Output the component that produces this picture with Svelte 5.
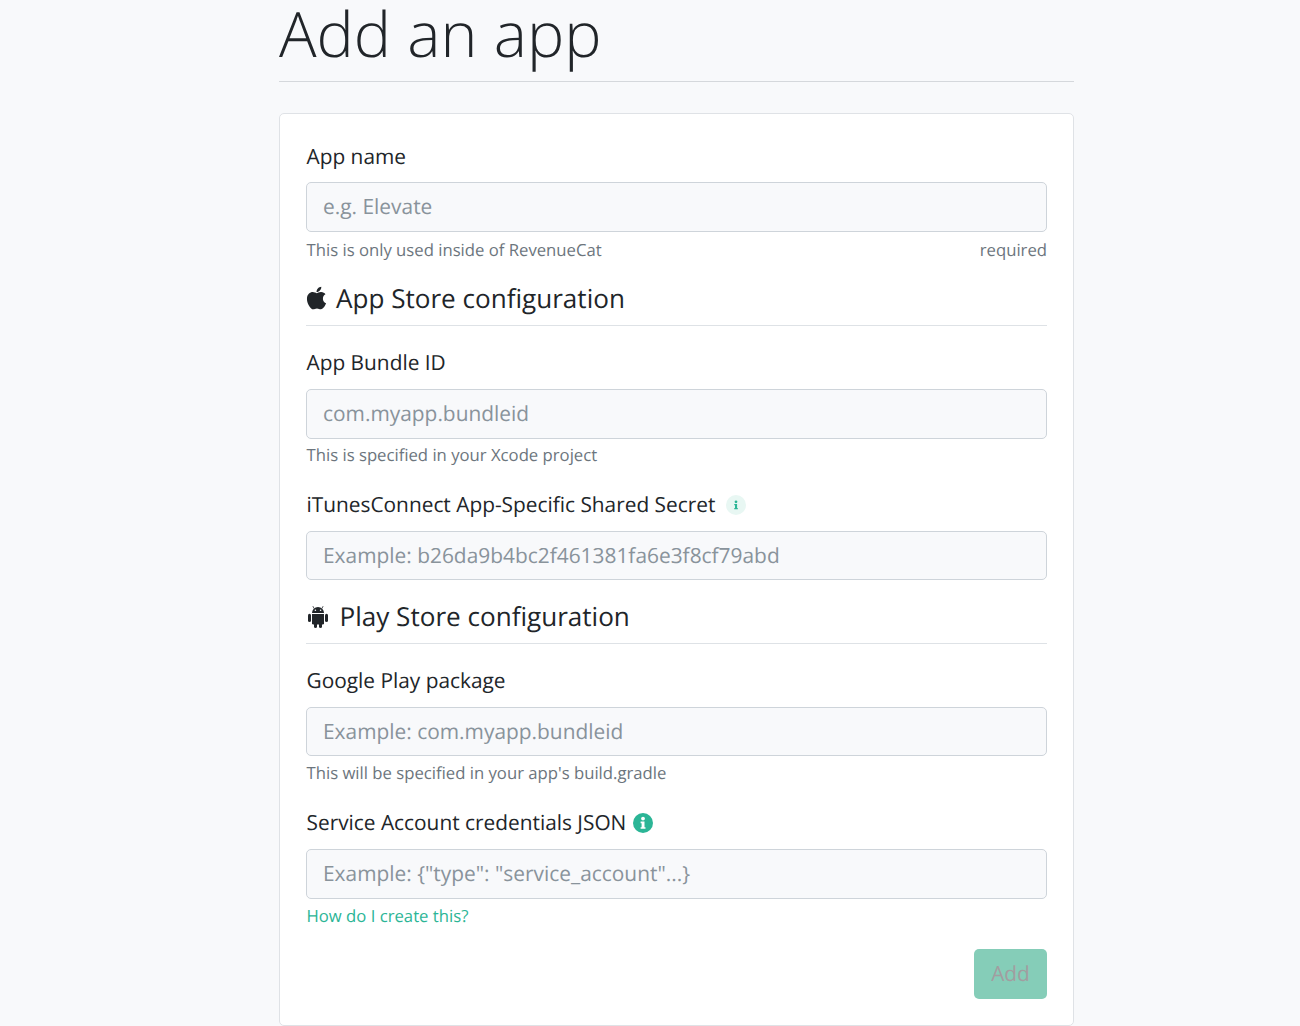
<script>
	const apple =
		'M318.7 268.7c-.2-36.7 16.4-64.4 50-84.8-18.8-26.9-47.2-41.7-84.7-44.6-35.5-2.8-74.3 20.7-88.5 20.7-15 0-49.4-19.7-76.4-19.7C63.3 141.2 4 184.8 4 273.5q0 39.3 14.4 81.2c12.8 36.7 59 126.7 107.2 125.2 25.2-.6 43-17.9 75.8-17.9 31.8 0 48.3 17.9 76.4 17.9 48.6-.7 90.4-82.5 102.6-119.3-65.2-30.7-61.7-90-61.7-91.9zm-56.6-164.2c27.3-32.4 24.8-61.9 24-72.5-24.1 1.4-52 16.4-67.9 34.9-17.5 19.8-27.8 44.3-25.6 71.9 26.1 2 49.9-11.4 69.5-34.3z';
</script>

{#snippet info(soft)}
	<svg class="info" class:soft viewBox="0 0 20 20" aria-hidden="true">
		<circle class="disc" cx="10" cy="10" r="10" />
		<circle class="mark" cx="10" cy="5.6" r="1.9" />
		<path class="mark" d="M7.6 8.6h3.9v5.6h1v1.6H7.6v-1.6h1v-4H7.6z" />
	</svg>
{/snippet}

<main class="page">
	<h1>Add an app</h1>

	<form class="card">
		<div class="field first">
			<label for="name">App name</label>
			<input id="name" placeholder="e.g. Elevate" />
			<div class="help">
				<span>This is only used inside of RevenueCat</span>
				<span>required</span>
			</div>
		</div>

		<h2>
			<svg class="apple" viewBox="0 0 384 512" aria-hidden="true"><path d={apple} /></svg>
			App Store configuration
		</h2>

		<div class="field">
			<label for="bundle">App Bundle ID</label>
			<input id="bundle" placeholder="com.myapp.bundleid" />
			<div class="help"><span>This is specified in your Xcode project</span></div>
		</div>

		<div class="field">
			<label for="secret">iTunesConnect App-Specific Shared Secret {@render info(true)}</label>
			<input id="secret" placeholder="Example: b26da9b4bc2f461381fa6e3f8cf79abd" />
		</div>

		<h2 class="play">
			<svg class="android" viewBox="0 0 20 24" aria-hidden="true">
				<path d="M4 9a6 6 0 0 1 12 0z" />
				<path class="antenna" d="M6.2 4.6 4.9 2.2M13.8 4.6l1.3-2.4" />
				<path d="M4 10h12v9.2a1.4 1.4 0 0 1-1.4 1.4H5.4A1.4 1.4 0 0 1 4 19.2z" />
				<rect x="0" y="9.8" width="3" height="8.2" rx="1.5" />
				<rect x="17" y="9.8" width="3" height="8.2" rx="1.5" />
				<rect x="6" y="18" width="3" height="6" rx="1.5" />
				<rect x="11" y="18" width="3" height="6" rx="1.5" />
				<circle class="eye" cx="7.4" cy="6.3" r=".8" />
				<circle class="eye" cx="12.6" cy="6.3" r=".8" />
			</svg>
			Play Store configuration
		</h2>

		<div class="field package">
			<label for="package">Google Play package</label>
			<input id="package" placeholder="Example: com.myapp.bundleid" />
			<div class="help"><span>This will be specified in your app's build.gradle</span></div>
		</div>

		<div class="field last">
			<label for="json">Service Account credentials JSON {@render info(false)}</label>
			<input id="json" placeholder={'Example: {"type": "service_account"...}'} />
			<div class="help"><a href="#json">How do I create this?</a></div>
		</div>

		<div class="actions">
			<button type="button" disabled>Add</button>
		</div>
	</form>
</main>

<style>
	:global(body) {
		background: #f8f9fb;
		font-family: 'Open Sans', sans-serif;
		color: #212529;
		text-rendering: geometricPrecision;
	}

	.page {
		width: 795px;
		height: 1026px;
		overflow: hidden;
		margin-left: 279px;
	}

	h1 {
		height: 81px;
		margin: 0 0 31px;
		font-size: 62.6px;
		font-weight: 300;
		line-height: 68px;
		border-bottom: 1px solid #d5d8dc;
	}

	.card {
		box-sizing: border-box;
		height: 913px;
		padding: 29px 26px 0 26px;
		background: #fff;
		border: 1px solid #dfe2e6;
		border-radius: 5px;
	}

	.field {
		margin-bottom: 24.5px;
	}

	.field.package {
		margin-bottom: 25.5px;
	}

	.field.last {
		margin-bottom: 21px;
	}

	label {
		display: block;
		height: 27px;
		margin-bottom: 12px;
		padding-left: 0.5px;
		font-size: 20.85px;
		line-height: 27px;
	}

	.first label {
		padding-top: 1px;
		margin-bottom: 11px;
	}

	input {
		display: block;
		box-sizing: border-box;
		width: 100%;
		height: 49.5px;
		padding: 1px 16px 0;
		font: 400 20.9px 'Open Sans', sans-serif;
		text-rendering: geometricPrecision;
		color: #495057;
		background: #f8f9fb;
		border: 1px solid #ced4da;
		border-radius: 5px;
	}

	input::placeholder {
		color: #89939b;
		opacity: 1;
	}

	.help {
		display: flex;
		justify-content: space-between;
		margin-top: 4.5px;
		padding-left: 0.5px;
		font-size: 16.7px;
		line-height: 24px;
		color: #6c757d;
	}

	.first .help {
		margin-top: 6px;
	}

	.last .help {
		margin-top: 5px;
	}

	a {
		color: #2bb596;
		text-decoration: none;
	}

	h2 {
		display: flex;
		align-items: flex-start;
		gap: 9.5px;
		box-sizing: border-box;
		height: 46px;
		margin: -6px 0 24px;
		font-size: 26.08px;
		font-weight: 400;
		line-height: 36px;
		border-bottom: 1px solid #dee2e6;
	}

	h2.play {
		gap: 10.5px;
		margin-top: -7px;
	}

	.apple {
		width: 21px;
		height: 26px;
		margin-top: 5px;
		margin-left: -0.5px;
		fill: #212529;
	}

	.android {
		width: 22px;
		height: 24px;
		margin-top: 6px;
		margin-left: 1px;
		fill: #212529;
	}

	.antenna {
		fill: none;
		stroke: #212529;
		stroke-width: 0.8;
	}

	.eye {
		fill: #fff;
	}

	.info {
		display: inline-block;
		width: 20px;
		height: 20px;
		margin-left: 1px;
		vertical-align: -3px;
	}

	.info .disc {
		fill: #2bb596;
	}

	.info .mark {
		fill: #fff;
	}

	.info.soft {
		margin-left: 5px;
	}

	.info.soft .disc {
		fill: #e8f7f3;
	}

	.info.soft .mark {
		fill: #2bb596;
		transform: scale(0.72);
		transform-origin: center;
	}

	.actions {
		display: flex;
		justify-content: flex-end;
	}

	button {
		width: 73px;
		height: 50px;
		font: 400 20.85px 'Open Sans', sans-serif;
		text-rendering: geometricPrecision;
		color: #a29da0;
		background: #85cdb8;
		border: 0;
		border-radius: 5px;
	}
</style>
